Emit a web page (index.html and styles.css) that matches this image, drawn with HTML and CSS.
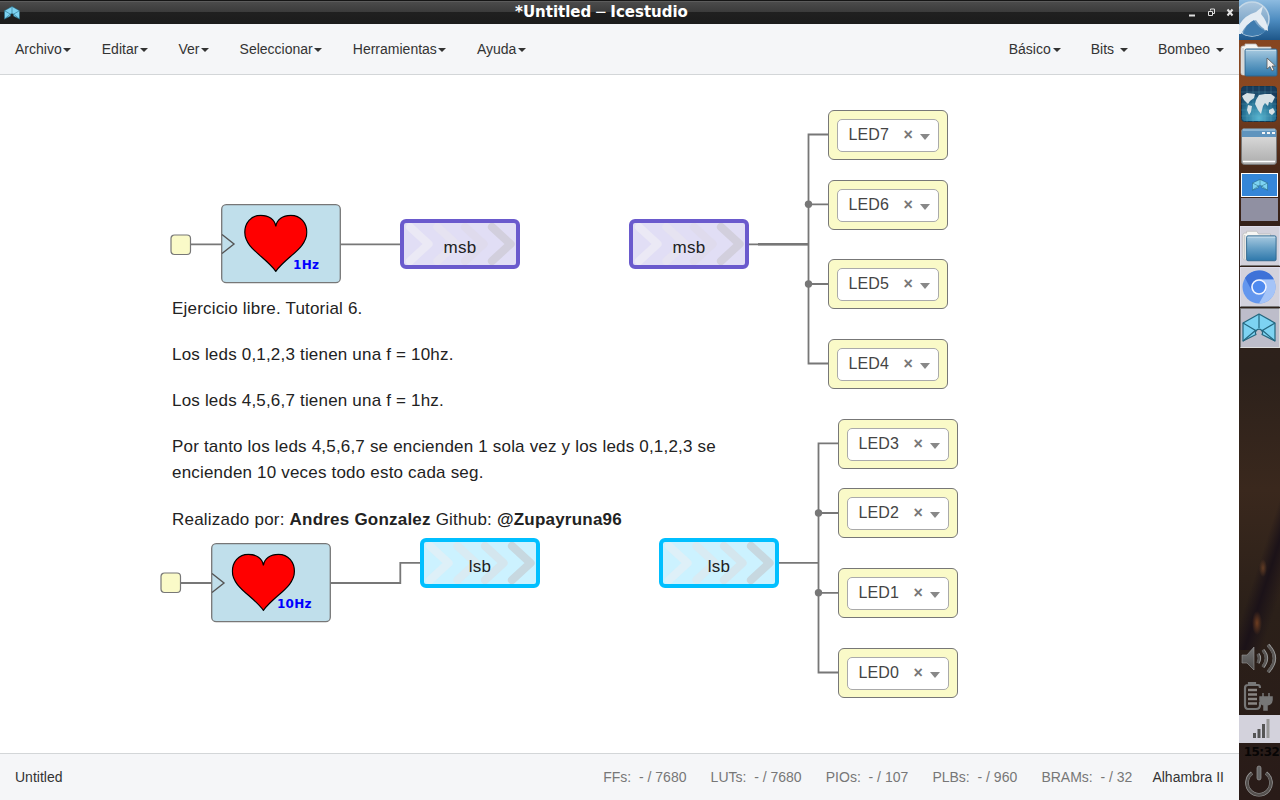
FILE: index.html
```
<!DOCTYPE html>
<html lang="es">
<head>
<meta charset="utf-8">
<title>*Untitled – Icestudio</title>
<link rel="stylesheet" href="styles.css">
</head>
<body>
<svg class="defs" width="0" height="0">
  <defs>
    <linearGradient id="blue" x1="0" y1="0" x2="0" y2="1"><stop offset="0" stop-color="#a9cbe1"/><stop offset=".5" stop-color="#669fc5"/><stop offset="1" stop-color="#2e78ab"/></linearGradient>
    <linearGradient id="silver" x1="0" y1="0" x2="0" y2="1"><stop offset="0" stop-color="#e4e4e4"/><stop offset="1" stop-color="#acacac"/></linearGradient>
    <linearGradient id="steel" x1="0" y1="0" x2="0" y2="1"><stop offset="0" stop-color="#777"/><stop offset="1" stop-color="#4c4a49"/></linearGradient>
    <linearGradient id="sky" x1="0" y1="0" x2="0" y2="1"><stop offset="0" stop-color="#8dbbe0"/><stop offset=".5" stop-color="#4d8cc0"/><stop offset="1" stop-color="#1d5689"/></linearGradient>
    <linearGradient id="disc" x1="0" y1="0" x2="0" y2="1"><stop offset="0" stop-color="#adc8df"/><stop offset="1" stop-color="#5e90ba"/></linearGradient>
    <radialGradient id="ocean" cx=".5" cy=".9" r=".8"><stop offset="0" stop-color="#58b6d2"/><stop offset=".6" stop-color="#246e91"/><stop offset="1" stop-color="#173c5c"/></radialGradient>
    <symbol id="ice" viewBox="0 0 34 30">
      <g fill="#7dd3f2" stroke="#24677f" stroke-width="1.2" stroke-linejoin="round">
        <path d="M1 10L17 1L33 10V28L20 21.500A3.500 3.500 0 1 0 14 21.500L1 28Z"/>
        <path fill="none" d="M17 1V15M1 10L14.500 18M1 28L14 17M33 10L19.500 18M33 28L20 17"/>
      </g>
    </symbol>
    <symbol id="folder" viewBox="0 0 38 34">
      <path d="M1 5Q1 3 3 3H5V1H16L18 4H31V9H8V32H3Q1 32 1 30Z" fill="#f6f6f3" stroke="#b9b9b9" stroke-width=".8"/>
      <path d="M3 5V31" stroke="#bbb"/>
      <rect x="5" y="6" width="32" height="27" rx="1.500" fill="url(#blue)" stroke="#30658b"/>
      <path d="M6 7.500H36" stroke="#c5dcea"/>
    </symbol>
    <symbol id="heart" viewBox="0 0 64 58">
      <path d="M32 12C33 5 39 1 47 1C57 1 63 9 63 18C63 34 43 42 32 57C21 42 1 34 1 18C1 9 7 1 17 1C25 1 31 5 32 12Z" fill="#f00" stroke="#000" stroke-width="1.200"/>
    </symbol>
    <symbol id="chevrons" viewBox="0 0 112 42">
      <g fill="none" stroke-width="8.200" stroke-linecap="round" stroke-linejoin="round">
        <path class="c1" d="M6 4L24.500 21L6 38"/><path class="c2" d="M33.500 4L52 21L33.500 38"/><path class="c3" d="M61 4L79.500 21L61 38"/><path class="c4" d="M88 4L106.500 21L88 38"/>
      </g>
    </symbol>
  </defs>
</svg>
<div class="app">
  <header class="titlebar">
    <svg class="app-icon" viewBox="0 0 34 30" preserveAspectRatio="none"><use href="#ice"/></svg>
    <span class="title">*Untitled <span class="dash">−</span> Icestudio</span>
    <svg class="controls" viewBox="0 0 48 12"><path d="M1 8.500H7" stroke="#ddd" stroke-width="2"/><path d="M22.500 3.500V2H26.500V6.500H25M20.500 4.500H24.500V8.500H20.500Z" fill="none" stroke="#ddd"/><path d="M39.500 2.500L44.500 8.500M44.500 2.500L39.500 8.500" stroke="#e4e4e4" stroke-width="2"/></svg>
  </header>
  <nav class="menubar">
    <div class="group left"><a>Archivo<i class="caret"></i></a><a>Editar<i class="caret"></i></a><a>Ver<i class="caret"></i></a><a>Seleccionar<i class="caret"></i></a><a>Herramientas<i class="caret"></i></a><a>Ayuda<i class="caret"></i></a></div>
    <div class="group"><a>Básico<i class="caret"></i></a><a>Bits <i class="caret"></i></a><a>Bombeo <i class="caret"></i></a></div>
  </nav>
  <main class="canvas">
    <svg class="wires" viewBox="0 75 1239 678">
      <g fill="none" stroke="#777" stroke-width="1.800">
        <path d="M191 244.300H222M340 244.300H401M181 583H212M330 583H400.300V562.800H421"/>
        <path d="M748 244.300H808.500M829 134.500H808.500V363.500H829M808.500 204.300H829M808.500 284H829"/>
        <path d="M778 562.800H818.500M839 443.300H818.500V672.500H839M818.500 513H839M818.500 592.800H839"/>
      </g>
      <path d="M758 244.300H808.500" stroke="#777" stroke-width="2.400"/>
      <g fill="#777"><circle cx="808.500" cy="204.300" r="3.700"/><circle cx="808.500" cy="284" r="3.700"/><circle cx="818.500" cy="513" r="3.700"/><circle cx="818.500" cy="592.800" r="3.700"/></g>
    </svg>

    <svg class="pin clk-a"><rect x="1" y="1" width="19.500" height="19.500" rx="3.500"/></svg>
    <svg class="pin clk-b"><rect x="1" y="1" width="19.500" height="19.500" rx="3.500"/></svg>

    <svg class="block block-a" viewBox="0 0 120 80"><rect class="body" x=".700" y=".700" width="118.600" height="78" rx="4.500"/><path d="M1 30.500L13 40L1 49.500" fill="none" stroke="#555" stroke-width="1.400"/><use href="#heart" x="22.800" y="10.300" width="64" height="58"/><text x="72" y="65" textLength="26">1Hz</text></svg>
    <svg class="block block-b" viewBox="0 0 120 80"><rect class="body" x=".700" y=".700" width="118.600" height="78" rx="4.500"/><path d="M1 30.500L13 40L1 49.500" fill="none" stroke="#555" stroke-width="1.400"/><use href="#heart" x="20.400" y="10.300" width="64" height="58"/><text x="66" y="65" textLength="34.500">10Hz</text></svg>

    <div class="label msb msb-in"><svg><use href="#chevrons"/></svg><span>msb</span></div>
    <div class="label msb msb-out"><svg><use href="#chevrons"/></svg><span>msb</span></div>
    <div class="label lsb lsb-in"><svg><use href="#chevrons"/></svg><span>lsb</span></div>
    <div class="label lsb lsb-out"><svg><use href="#chevrons"/></svg><span>lsb</span></div>

    <div class="led led7"><div class="select"><span>LED7</span><b>×</b><i></i></div></div>
    <div class="led led6"><div class="select"><span>LED6</span><b>×</b><i></i></div></div>
    <div class="led led5"><div class="select"><span>LED5</span><b>×</b><i></i></div></div>
    <div class="led led4"><div class="select"><span>LED4</span><b>×</b><i></i></div></div>
    <div class="led led3"><div class="select"><span>LED3</span><b>×</b><i></i></div></div>
    <div class="led led2"><div class="select"><span>LED2</span><b>×</b><i></i></div></div>
    <div class="led led1"><div class="select"><span>LED1</span><b>×</b><i></i></div></div>
    <div class="led led0"><div class="select"><span>LED0</span><b>×</b><i></i></div></div>

    <article class="note">
      <p>Ejercicio libre. Tutorial 6.</p>
      <p>Los leds 0,1,2,3 tienen una f = 10hz.</p>
      <p>Los leds 4,5,6,7 tienen una f = 1hz.</p>
      <p>Por tanto los leds 4,5,6,7 se encienden 1 sola vez y los leds 0,1,2,3 se<br>encienden 10 veces todo esto cada seg.</p>
      <p class="credits">Realizado por: <strong>Andres Gonzalez</strong> Github: <strong>@Zupayruna96</strong></p>
    </article>
  </main>
  <footer class="statusbar">
    <span class="project">Untitled</span>
    <div class="resources"><span>FFs:&nbsp; - / 7680</span><span>LUTs:&nbsp; - / 7680</span><span>PIOs:&nbsp; - / 107</span><span>PLBs:&nbsp; - / 960</span><span>BRAMs:&nbsp; - / 32</span></div>
    <span class="board">Alhambra II</span>
  </footer>
</div>

<aside class="dock">
  <svg class="start" viewBox="0 0 41 40"><rect width="41" height="40" fill="url(#sky)"/><circle cx="13" cy="19" r="17" fill="url(#disc)" stroke="#c5d8e7" stroke-width="1.500"/><path d="M0 25Q6 15 17 12L24 6L22 14Q29 22 29 31Q22 28 17 20Q8 22 2 34H0Z" fill="#e4ecf3"/><path d="M4 34Q7 24 15 20Q19 28 27 31Q17 39 4 34Z" fill="#3f7caf"/></svg>
  <div class="slot files"><svg width="38" height="34"><use href="#folder"/></svg><svg class="pointer" viewBox="0 0 10 15"><path d="M1 1V12L4 9.500L6 14L8 13L6 9H9.500Z" fill="#eee" stroke="#555" stroke-width=".8"/></svg></div>
  <svg class="globe" viewBox="0 0 36 36"><rect x=".5" y=".5" width="35" height="35" rx="3" fill="url(#ocean)" stroke="#123852"/><path d="M0 6H36M0 12H36M0 18H36M0 24H36M0 30H36M6 0V36M12 0V36M18 0V36M24 0V36M30 0V36" stroke="#6db4cb" stroke-opacity=".35" stroke-width=".7"/><path d="M1 10L6 7L14 8L13 12L9 15L7 18L3 14ZM7 19L11 20L10 26L8 29L6 24ZM15 14L18 9L24 8L30 8L34 11L31 17L28 16L27 20L24 17L22 20L20 28L17 24L14 18ZM28 24L32 22L34 26L31 29L28 27Z" fill="#d5e1e6"/></svg>
  <svg class="window" viewBox="0 0 36 37"><rect x=".5" y=".5" width="35" height="36" rx="3" fill="url(#silver)" stroke="#777"/><path d="M1 9V3Q1 1 3 1H33Q35 1 35 3V9Z" fill="#5f94be"/><path d="M2 2H34" stroke="#b8d3e6"/><path d="M21 5H24M26 5H29M31 5H34" stroke="#f5f5f5" stroke-width="2"/><path d="M2 33.500H34" stroke="#fff" stroke-width="1.500"/></svg>
  <div class="pager"><div class="desk active"><svg width="16" height="12" viewBox="0 0 34 30" preserveAspectRatio="none"><use href="#ice"/></svg></div><div class="desk"></div></div>
  <div class="task"><svg width="35" height="32"><use href="#folder"/></svg></div>
  <div class="task"><svg width="34" height="34" viewBox="0 0 34 34"><circle cx="17" cy="17" r="16.500" fill="#6497ee"/><path d="M17 .5A16.500 16.500 0 0 1 32 9.500H17A8 8 0 0 0 10 21L3 8Q8 .5 17 .5Z" fill="#3e72d8"/><path d="M17 9.500H31.800A16.500 16.500 0 0 1 17 33.500L24 21Q26 14 17 9.500Z" fill="#a5c4f8"/><circle cx="17" cy="17" r="7" fill="#4f8aef" stroke="#f2f5ff" stroke-width="1.600"/></svg></div>
  <div class="task current"><svg width="34" height="30"><use href="#ice"/></svg></div>
  <div class="spacer"></div>
  <svg class="volume" viewBox="0 2 41 36"><path d="M3 14H8L15 6V29L8 22H3Z" fill="url(#steel)" stroke="#999" stroke-width=".6"/><path d="M19 13Q22 17 19 22M24 9Q31 17 24 26M29 4Q42 17 29 31" fill="none" stroke="#999" stroke-width="3.200"/><path d="M18.500 13Q21.500 17 18.500 22M23.500 9Q30.500 17 23.500 26M28.500 4Q41.500 17 28.500 31" fill="none" stroke="#5a5755" stroke-width="2.300"/></svg>
  <svg class="battery" viewBox="0 -1 41 36"><path d="M10 5V3H16V5H19Q21 5 21 8M21 22V25Q21 29 17 29H9Q6 29 6 25V8Q6 5 9 5H19" fill="none" stroke="#777" stroke-width="2.200"/><path d="M9 10H18M9 14.500H18M9 19H18M9 23.500H18" stroke="#898582" stroke-width="2.600"/><path d="M24 13V17M30 13V17M21 17H33V20Q33 24 28 25V30H25V25Q21 24 21 20Z" fill="#777" stroke="#777" stroke-width="1.500"/></svg>
  <div class="signal"><svg width="41" height="28"><path d="M14 18H17V23H14Z M18.500 14H21.500V23H18.500Z M23 9H26V23H23Z" fill="#555"/><path d="M27.500 4H30.500V23H27.500Z" fill="#999"/></svg></div>
  <div class="clock">15:32</div>
  <svg class="power" viewBox="0 -1 41 38"><path d="M13 10A12 12 0 1 0 27 10" fill="none" stroke="#999" stroke-width="3.600"/><path d="M13 10.500A11.800 11.800 0 1 0 27 10.500" fill="none" stroke="#54504e" stroke-width="2.400"/><rect x="18" y="3" width="4" height="14" rx="2" fill="#666" stroke="#999" stroke-width=".7"/></svg>
</aside>
</body>
</html>
```
FILE: styles.css
```
* { box-sizing: border-box; }
body { margin: 0; width: 1280px; height: 800px; display: flex; overflow: hidden; font: 14px/20px "Liberation Sans", Arial, sans-serif; color: #333; background: #fff; }
.defs { position: absolute; }
svg { display: block; flex: none; }

.app { width: 1239px; height: 800px; display: flex; flex-direction: column; }
.titlebar { height: 24px; flex: none; display: flex; align-items: center; padding: 0 3px 0 4px; border-top: 1px solid #151515; background: linear-gradient(#6d6d6d 0, #4b4b4b 1px, #3b3b3b 11px, #202020 11px, #1c1c1c 100%); }
.app-icon { width: 16px; height: 14px; }
.title { flex: 1; padding: 0 6px 2px 1px; text-align: center; font: bold 15px/20px "DejaVu Sans", sans-serif; color: #fff; }
.dash { font-weight: normal; margin: 0 -2px; }
.controls { width: 48px; height: 12px; }
.menubar { height: 51px; flex: none; display: flex; justify-content: space-between; background: #f5f6f8; border-bottom: 1px solid #d3d6d8; }
.group { display: flex; }
.group a { padding: 15px; white-space: pre; }
.left { gap: .6px; }
.caret { display: inline-block; margin-left: 2px; vertical-align: middle; border: 4px solid transparent; border-top-color: #333; border-bottom: 0; }
.left .caret { margin-left: 1.5px; }

.canvas { position: relative; flex: 1; background: #fff; }
.wires { position: absolute; left: 0; top: 0; width: 1239px; height: 678px; }
.pin { position: absolute; width: 22px; height: 22px; fill: #fafac8; stroke: #777; stroke-width: 1.2; }
.clk-a { left: 170px; top: 158.5px; }
.clk-b { left: 160px; top: 497px; }
.block { position: absolute; width: 120px; height: 80px; }
.body { fill: #c0dfeb; stroke: #777; stroke-width: 1.3; }
.block text { font: bold 12px "DejaVu Sans", sans-serif; fill: #00f; }
.block-a { left: 221px; top: 129px; }
.block-b { left: 211px; top: 468px; }

.label { position: absolute; width: 120px; height: 50px; border: 4px solid; border-radius: 6px; display: grid; }
.label > * { grid-area: 1 / 1; }
.label svg { width: 112px; height: 42px; }
.label span { align-self: center; text-align: center; padding-top: 7px; font-size: 17px; letter-spacing: .3px; color: #222; }
.msb { border-color: #6a5acd; background: #e1def5; --c1: #ebe9f5; --c2: #e6e3f1; --c3: #dfdbed; --c4: #d2cfdd; }
.lsb { border-color: #00bfff; background: #ccf2ff; --c1: #def0f8; --c2: #d9ebf3; --c3: #d4e6ee; --c4: #c7d8e0; }
.c1 { stroke: var(--c1); }
.c2 { stroke: var(--c2); }
.c3 { stroke: var(--c3); }
.c4 { stroke: var(--c4); }
.msb-in { left: 400px; top: 144px; }
.msb-out { left: 629px; top: 144px; }
.lsb-in { left: 420px; top: 463px; }
.lsb-out { left: 659px; top: 463px; }

.led { position: absolute; left: 828px; width: 120px; height: 50px; padding: 8px; border: 1.4px solid #777; border-radius: 6px; background: #fafac8; }
.select { height: 32.5px; width: 102px; display: flex; align-items: center; padding: 0 8px 1px 10.400px; border: 1px solid #aaa; border-radius: 5px; background: #fff; font-size: 16px; color: #444; }
.select span { width: 55px; letter-spacing: .15px; }
.select b { width: 16.500px; color: #777; font-size: 16px; }
.select i { margin-top: 4px; border: 5px solid transparent; border-top: 6px solid #888; border-bottom: 0; }
.led7 { top: 35px; }
.led6 { top: 105px; }
.led5 { top: 184px; }
.led4 { top: 264px; }
.led3 { top: 344px; left: 838px; }
.led2 { top: 413px; left: 838px; }
.led1 { top: 493px; left: 838px; }
.led0 { top: 573px; left: 838px; }
.note { position: absolute; left: 172px; top: 220.6px; font-size: 17px; line-height: 26px; letter-spacing: .19px; color: #222; white-space: nowrap; }
.note p { margin: 0 0 20.200px; }
.note .credits { padding-top: .8px; letter-spacing: .215px; }

.statusbar { height: 47px; flex: none; display: flex; align-items: center; padding: 0 15px; border-top: 1px solid #d3d6d8; background: #f5f6f8; }
.resources { margin-left: auto; display: flex; gap: 24.15px; color: #777; }
.board { margin-left: 20px; }

.dock { width: 41px; height: 800px; display: flex; flex-direction: column; background: radial-gradient(ellipse 5px 12px at 18px 623px, #6e3d20, transparent), radial-gradient(ellipse 4px 9px at 24px 568px, #623c24, transparent), linear-gradient(108deg, transparent 45%, #1b1218 60%, transparent 80%) 0 500px / 41px 150px no-repeat, linear-gradient(#83441f 0, #8a4821 90px, #4c2918 160px, #33211a 230px, #2c211b 370px, #3a281d 490px, #2b2019 610px, #291b18 800px); }
.start { width: 41px; height: 40px; }
.slot { height: 46px; padding: 3px 1px; position: relative; }
.pointer { position: absolute; left: 27px; top: 17px; width: 10px; height: 15px; }
.globe { width: 36px; height: 36px; margin-left: 2px; }
.window { width: 36px; height: 37px; margin: 6px 0 0 2px; }
.pager { margin: 8px 2px 5px; display: flex; flex-direction: column; gap: 1px; }
.desk { height: 23px; background: #9090a2; }
.desk.active { height: 24px; border: 1px solid #fff; background: #3586d8; display: grid; place-items: center; }
.task { height: 40px; flex: none; margin-bottom: 1px; width: 40px; display: grid; place-content: center; padding: 0 2px 0 0; background: #d3d2dc; border: 1px solid #deddea; border-bottom-color: #777; margin-left: 1px; }
.task.current { background: #bdbdca; border-color: #777 #ddd #ddd #777; }
.spacer { flex: 1; }
.volume { width: 41px; height: 36px; }
.battery { width: 41px; height: 36px; }
.signal { height: 28px; flex: none; background: #d3d2dc; }
.clock { height: 19px; flex: none; text-align: center; padding-left: 4px; font: bold 12px/19px "DejaVu Sans", sans-serif; letter-spacing: -.5px; color: #070505; }
.power { width: 41px; height: 38px; }
```
